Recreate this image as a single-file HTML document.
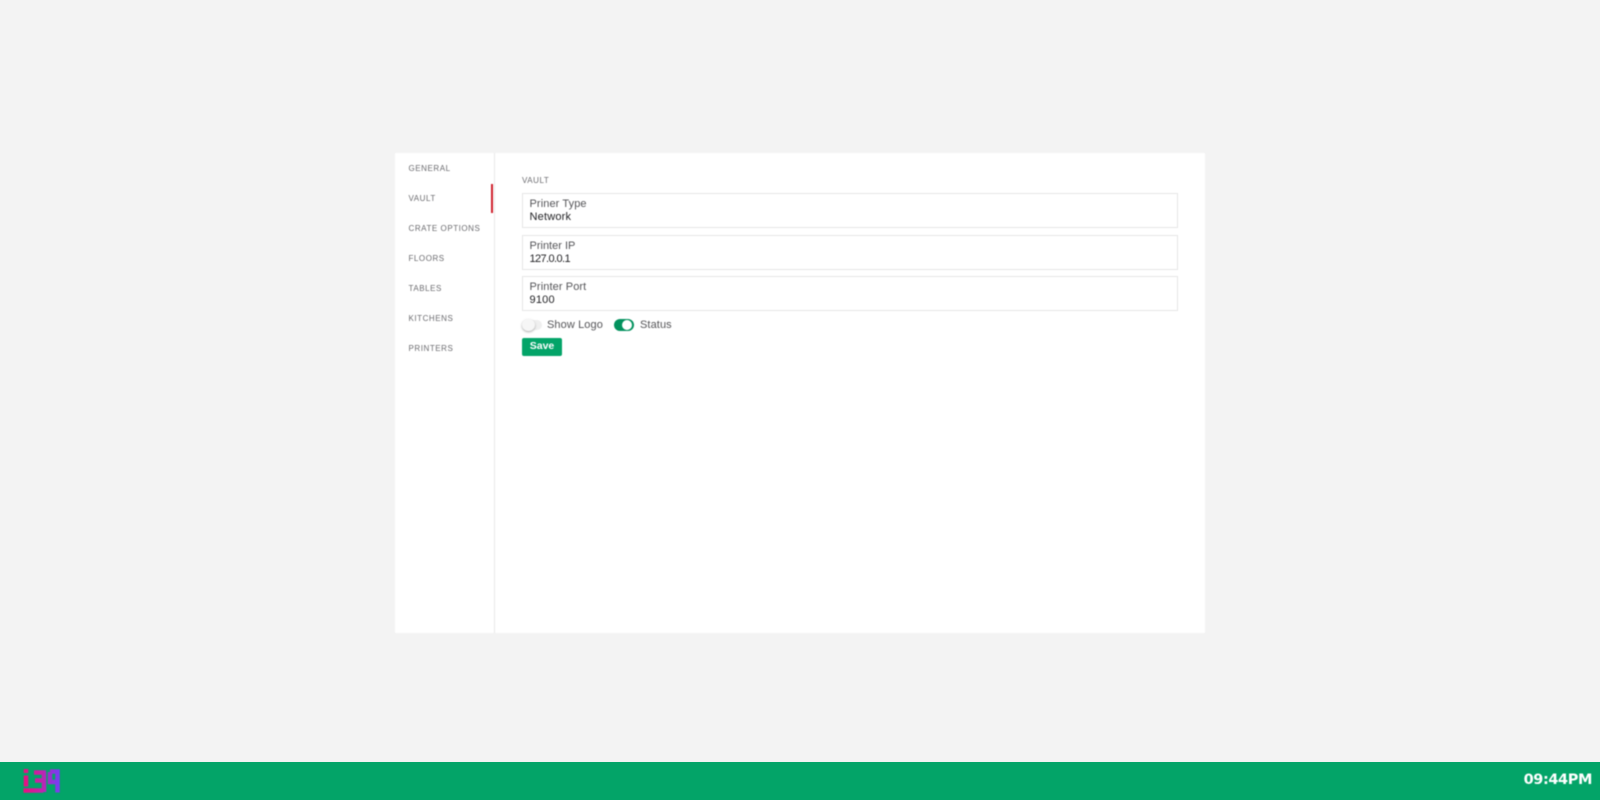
<!DOCTYPE html>
<html><head><meta charset="utf-8"><style>
html,body{margin:0;padding:0;width:1600px;height:800px;overflow:hidden;background:#f3f3f3;font-family:"Liberation Sans",sans-serif}
#w{position:absolute;left:0;top:0;width:1600px;height:800px;filter:blur(.4px)}
.a{position:absolute;white-space:nowrap}
#panel{position:absolute;left:395px;top:153px;width:810px;height:480px;background:#fff}
#div{position:absolute;left:494px;top:153px;width:1px;height:480px;background:#e8e8e8}
#bar{position:absolute;left:491px;top:184px;width:2px;height:29px;background:#cf1f2c}
.n{position:absolute;left:408.500px;font-size:8px;line-height:10px;color:#6b6b6f;letter-spacing:.55px;white-space:nowrap}
.box{position:absolute;left:521.500px;width:654px;height:33px;border:1px solid #e6e6e6}
.l{position:absolute;left:529.500px;font-size:11px;line-height:13px;color:#555558;white-space:nowrap;letter-spacing:.1px}
.v{position:absolute;left:529.500px;font-size:11px;line-height:13px;color:#222225;white-space:nowrap;letter-spacing:.2px}
#foot{position:absolute;left:0;top:762px;width:1600px;height:38px;background:#03a468}
</style></head><body>
<div id="foot"></div>
<div id="w">
<div id="panel"></div><div id="div"></div><div id="bar"></div>
<div class="n" style="top:164px">GENERAL</div>
<div class="n" style="top:194px">VAULT</div>
<div class="n" style="top:224px">CRATE OPTIONS</div>
<div class="n" style="top:254px">FLOORS</div>
<div class="n" style="top:284px">TABLES</div>
<div class="n" style="top:314px">KITCHENS</div>
<div class="n" style="top:344px">PRINTERS</div>
<div class="n" style="left:522px;top:176px">VAULT</div>
<div class="box" style="top:193px"></div>
<div class="l" style="top:198px">Priner Type</div>
<div class="v" style="top:211px">Network</div>
<div class="box" style="top:235px"></div>
<div class="l" style="top:240px;letter-spacing:0">Printer IP</div>
<div class="v" style="top:252.500px;letter-spacing:-.6px">127.0.0.1</div>
<div class="box" style="top:276px"></div>
<div class="l" style="top:281px">Printer Port</div>
<div class="v" style="top:293.500px">9100</div>
<div class="a" style="left:522px;top:320px;width:20px;height:10px;border-radius:6px;background:#efefef"></div>
<div class="a" style="left:522px;top:319px;width:13px;height:12px;border-radius:50%;background:#f6f6f6;box-shadow:0 1px 2px #aaa"></div>
<div class="l" style="left:547px;top:318.500px">Show Logo</div>
<div class="a" style="left:614px;top:319px;width:20px;height:12px;border-radius:6px;background:#03925e"></div>
<div class="a" style="left:622px;top:320px;width:10px;height:10px;border-radius:50%;background:#fff"></div>
<div class="l" style="left:640px;top:318.500px">Status</div>
<div class="a" style="left:522px;top:338px;width:40px;height:18px;border-radius:2px;background:#03a468;color:#fff;font-size:10.500px;font-weight:bold;line-height:17px;text-align:center">Save</div>
<svg class="a" style="left:20px;top:766px" width="44" height="30" viewBox="0 0 44 30">
<defs><linearGradient id="g" x1="0" x2="1" y1="0" y2="0"><stop offset="0" stop-color="#e8107f"/><stop offset=".55" stop-color="#c024b0"/><stop offset="1" stop-color="#7a3cf0"/></linearGradient></defs>
<g fill="none" stroke="url(#g)" stroke-width="4.500">
<path d="M6 3v4M6 9.500v11M3.500 24.500h20M24 26V6.500M14 6.500h12M15 14.500h9M30 6v10h7M30 5.500h7.500v21"/>
</g></svg>
<div class="a" style="right:8px;top:772px;color:#fff;font-family:'DejaVu Sans',sans-serif;font-weight:bold;font-size:14.500px;line-height:16px;letter-spacing:-.4px">09:44PM</div>
</div></body></html>
